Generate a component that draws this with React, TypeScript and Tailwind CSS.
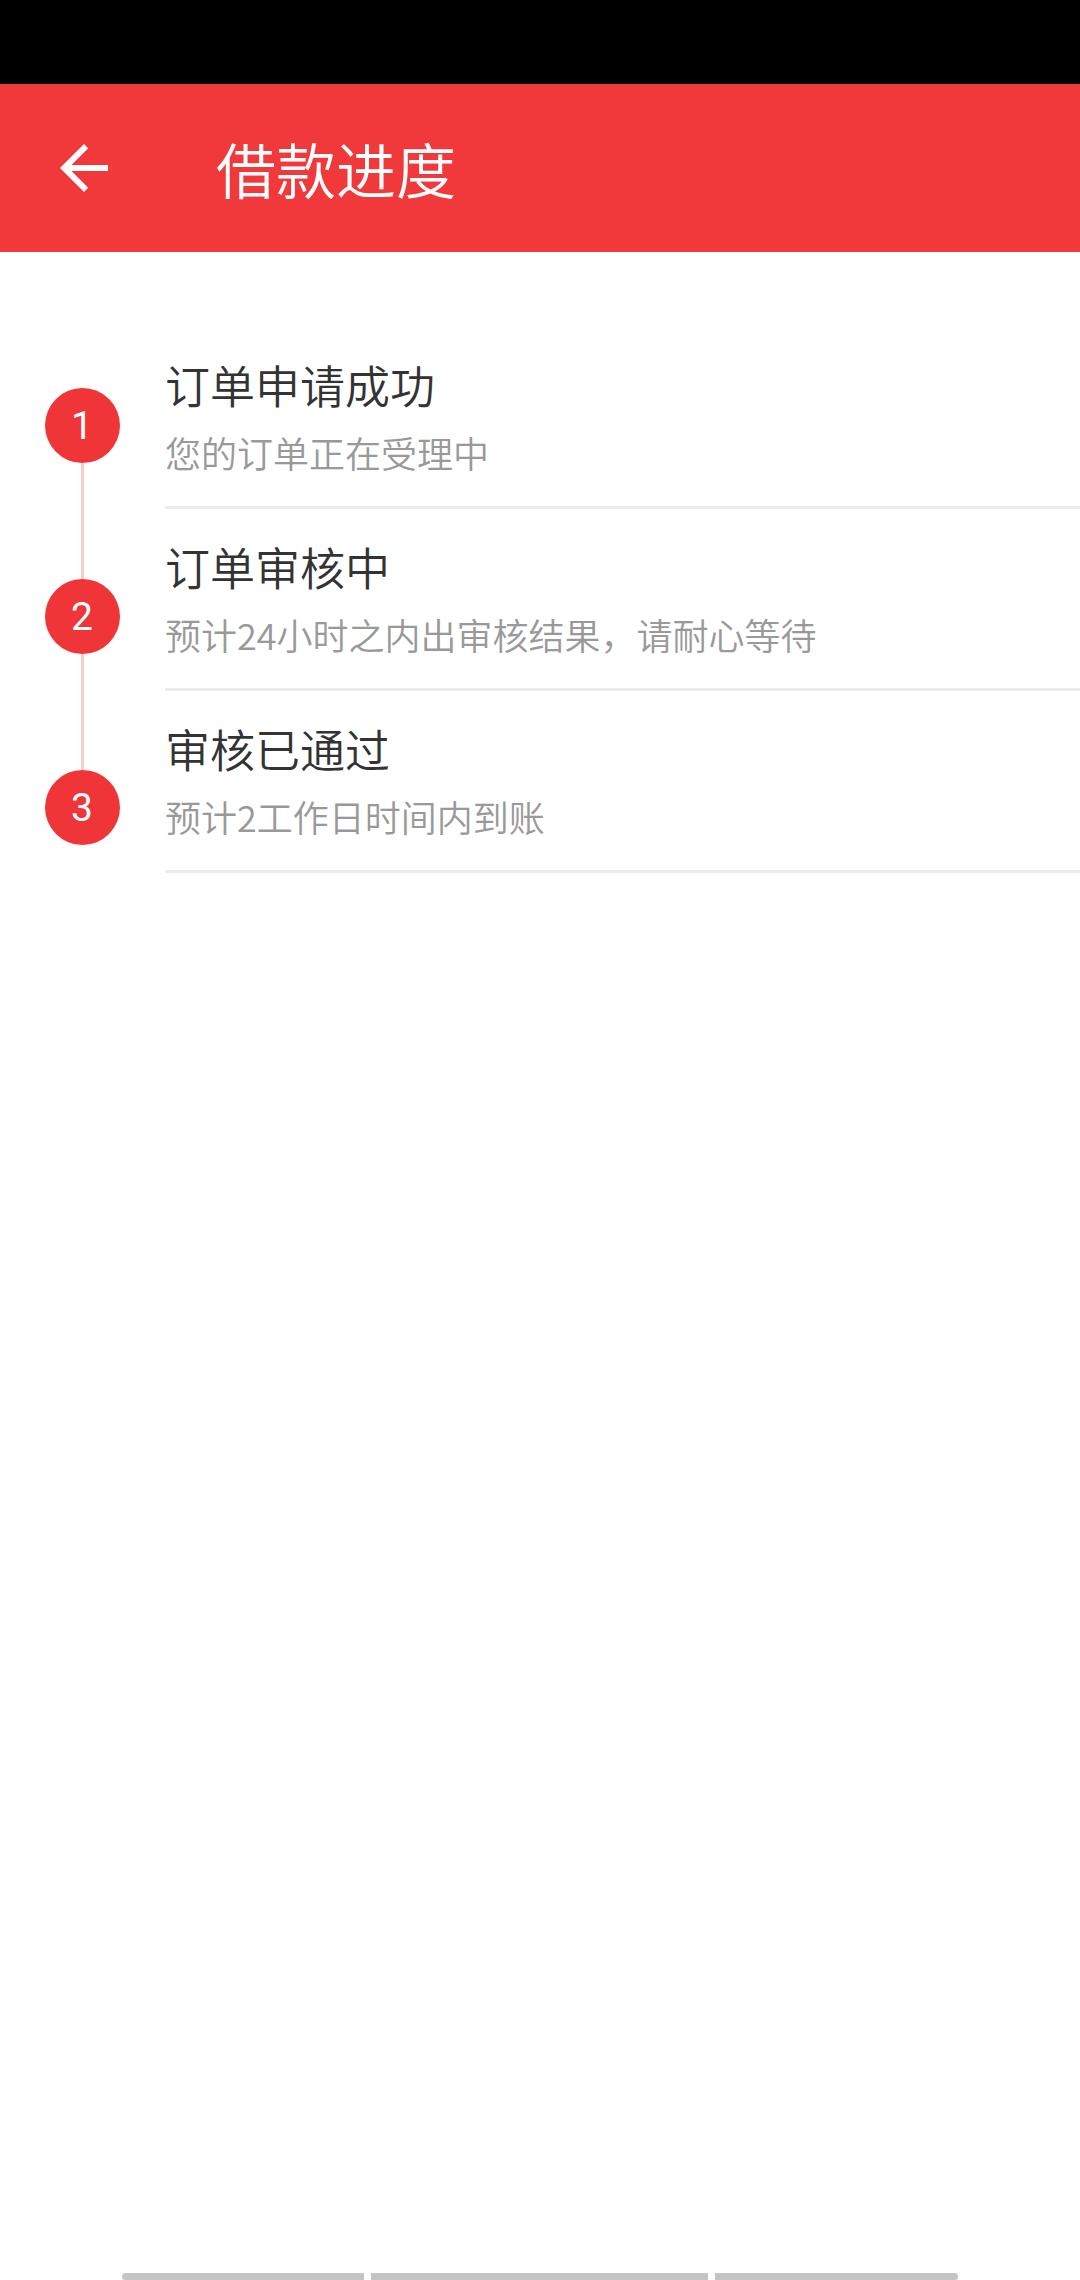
const steps = [
  { title: "订单申请成功", desc: "您的订单正在受理中" },
  { title: "订单审核中", desc: "预计24小时之内出审核结果，请耐心等待" },
  { title: "审核已通过", desc: "预计2工作日时间内到账" },
];

const cjk = { fontFamily: '"Noto Sans CJK SC", "Noto Sans", sans-serif' };

export default function App() {
  return (
    <div className="flex flex-col min-h-[2280px] w-[1080px] bg-white" style={cjk}>
      {/* status bar */}
      <div className="h-[84px] bg-black" />

      {/* toolbar */}
      <div className="h-[168px] bg-[#f1383a] flex items-center">
        <svg className="ml-[48px] w-[72px] h-[72px]" viewBox="0 0 24 24" fill="#ffffff">
          <path d="M20 11H7.83l5.59-5.59L12 4l-8 8 8 8 1.41-1.41L7.83 13H20v-2z" />
        </svg>
        <div className="ml-[96px] text-[60px] leading-[72px] font-[350] text-white">借款进度</div>
      </div>

      {/* content */}
      <div className="flex-1 flex">
        {/* timeline */}
        <div className="w-[165px] shrink-0 flex flex-col items-center pt-[136px] pr-[1px]">
          {steps.map((_, i) => (
            <div key={i} className="flex flex-col items-center">
              {i > 0 && <div className="w-[3px] h-[116px] bg-[#f6cfc1]" />}
              <div
                className="w-[75px] h-[75px] rounded-full bg-[#ef3538] flex items-center justify-center text-white text-[39px] leading-none pt-[2px]"
                style={{ fontFamily: "Roboto, sans-serif" }}
              >
                {i + 1}
              </div>
            </div>
          ))}
        </div>

        {/* list */}
        <div className="flex-1 pt-[75px]">
          {steps.map((s) => (
            <div key={s.title} className="flex flex-col">
              <div className="pt-[31px] pb-[32px] font-[350]">
                <div className="text-[45px] leading-[54px] text-[#333333]">{s.title}</div>
                <div className="mt-[18px] text-[36px] leading-[44px] text-[#999999]">{s.desc}</div>
              </div>
              <div className="h-[3px] bg-[#ebebeb]" />
            </div>
          ))}
        </div>
      </div>

      {/* bottom hint bar */}
      <div className="h-[7px] flex px-[122px] gap-[7px]">
        <div className="w-[242px] bg-[#c4c4c4] rounded-l-full" />
        <div className="flex-1 bg-[#c4c4c4]" />
        <div className="w-[243px] bg-[#c4c4c4] rounded-r-full" />
      </div>
    </div>
  );
}
